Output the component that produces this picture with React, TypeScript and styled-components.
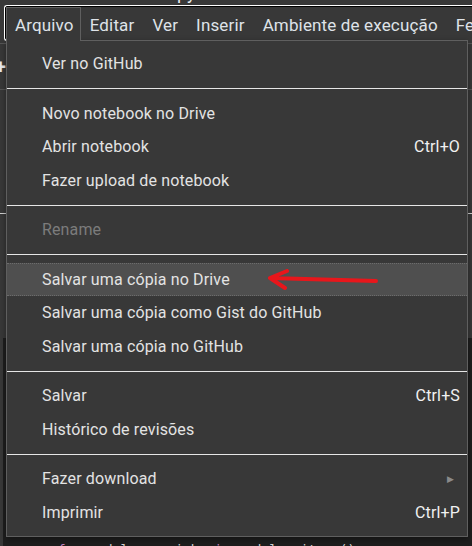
import React from "react";
import styled, { createGlobalStyle } from "styled-components";

const Global = createGlobalStyle`
  html, body { margin: 0; padding: 0; background: #383838; }
  body { font-family: Roboto, "Noto Sans", sans-serif; overflow: hidden; }
`;

const Page = styled.div`
  position: relative;
  width: 472px;
  height: 546px;
  overflow: hidden;
  background: #383838;
`;

const TitleStrip = styled.div`
  height: 5px;
  overflow: hidden;
  background: #383838;
`;

const TitleText = styled.div`
  margin: -17px 0 0 96px;
  font-size: 18px;
  line-height: 20px;
  color: #e8eaed;
`;

const MenuBar = styled.div`
  display: flex;
  align-items: flex-start;
  width: 540px;
  margin-left: 4px;
  padding: 1px 0 0 1px;
  box-sizing: border-box;
  height: 36px;
  border: 1px solid #ffffff;
  border-right: none;
  border-radius: 3px 0 0 3px;
  box-shadow: inset 1px 1px 0 #000;
`;

const MenuTab = styled.div<{ $open?: boolean }>`
  position: relative;
  z-index: ${(p) => (p.$open ? 3 : 1)};
  height: 34px;
  box-sizing: border-box;
  display: flex;
  align-items: center;
  padding: ${(p) => (p.$open ? "0 6px 0 8px" : "0 8px")};
  border: 1px solid ${(p) => (p.$open ? "#5f5f5f" : "transparent")};
  border-bottom: none;
  background: #383838;
  font-size: 17px;
  letter-spacing: 0.15px;
  color: #dfe3e8;
  white-space: nowrap;
`;

const Toolbar = styled.div`
  height: 45px;
  border-top: 1px solid #555;
  margin-top: 2px;
  border-bottom: 1px solid #555;
  display: flex;
  align-items: center;
`;

const PlusGlyph = styled.span`
  margin-left: -5px;
  font-size: 20px;
  font-weight: 700;
  color: #e8eaed;
`;

const Middle = styled.div`
  height: 248px;
  display: flex;
  flex-direction: column;
`;

const MidRule = styled.div`
  margin-top: 123px;
  height: 1px;
  background: #cfcfcf;
`;

const CodeArea = styled.div`
  margin-left: 3px;
  height: 220px;
  background: #1e1e1e;
  font-family: "DejaVu Sans Mono", monospace;
  font-size: 13px;
  line-height: 16px;
  padding-top: 204px;
  color: #d4d4d4;
  white-space: pre;
`;

const Kw = styled.span`
  color: #c586c0;
`;

const Dropdown = styled.div`
  position: absolute;
  z-index: 2;
  left: 6px;
  top: 40px;
  width: 462px;
  box-sizing: border-box;
  border: 1px solid #5f5f5f;
  background: #383838;
  padding: 6px 0 7px;
  box-shadow: 0 2px 6px rgba(0, 0, 0, 0.4);
`;

const Item = styled.div<{ $disabled?: boolean; $active?: boolean }>`
  position: relative;
  display: flex;
  align-items: center;
  justify-content: space-between;
  height: 33.5px;
  box-sizing: border-box;
  padding: 0 7px 0 35px;
  font-size: 16px;
  letter-spacing: 0.14px;
  color: ${(p) => (p.$disabled ? "#7c7c7c" : "#e3e3e3")};
  background: ${(p) => (p.$active ? "#4f4f4f" : "transparent")};
  border-top: 1px dotted ${(p) => (p.$active ? "#6c6c6c" : "transparent")};
  border-bottom: 1px dotted ${(p) => (p.$active ? "#6c6c6c" : "transparent")};
  white-space: nowrap;
`;

const Shortcut = styled.span`
  color: #f1f1f1;
`;

const SubArrow = styled.span`
  color: #8a8a8a;
  font-size: 9px;
  margin-right: 6px;
`;

const Separator = styled.div`
  height: 1px;
  margin: 7.5px 0;
  background: #e6e6e6;
`;

const ArrowSvg = styled.svg`
  position: absolute;
  left: 255px;
  top: 5px;
`;

type Entry =
  | { sep: true }
  | { label: string; shortcut?: string; disabled?: boolean; active?: boolean; sub?: boolean; arrow?: boolean };

const entries: Entry[] = [
  { label: "Ver no GitHub" },
  { sep: true },
  { label: "Novo notebook no Drive" },
  { label: "Abrir notebook", shortcut: "Ctrl+O" },
  { label: "Fazer upload de notebook" },
  { sep: true },
  { label: "Rename", disabled: true },
  { sep: true },
  { label: "Salvar uma cópia no Drive", active: true, arrow: true },
  { label: "Salvar uma cópia como Gist do GitHub" },
  { label: "Salvar uma cópia no GitHub" },
  { sep: true },
  { label: "Salvar", shortcut: "Ctrl+S" },
  { label: "Histórico de revisões" },
  { sep: true },
  { label: "Fazer download", sub: true },
  { label: "Imprimir", shortcut: "Ctrl+P" },
];

const menus = ["Arquivo", "Editar", "Ver", "Inserir", "Ambiente de execução", "Ferramentas"];

export default function App() {
  return (
    <>
      <Global />
      <Page>
        <TitleStrip>
          <TitleText>Untitled0.ipynb</TitleText>
        </TitleStrip>
        <MenuBar>
          {menus.map((m, i) => (
            <MenuTab key={m} $open={i === 0}>
              {m}
            </MenuTab>
          ))}
        </MenuBar>
        <Toolbar>
          <PlusGlyph>+</PlusGlyph>
        </Toolbar>
        <Middle>
          <MidRule />
        </Middle>
        <CodeArea>
          {"       "}
          <Kw>for</Kw>
          {" modelo, caminho "}
          <Kw>in</Kw>
          {" modelos.items():"}
        </CodeArea>
        <Dropdown>
          {entries.map((e, i) =>
            "sep" in e ? (
              <Separator key={i} />
            ) : (
              <Item key={i} $disabled={e.disabled} $active={e.active}>
                <span>{e.label}</span>
                {e.shortcut && <Shortcut>{e.shortcut}</Shortcut>}
                {e.sub && <SubArrow>▶</SubArrow>}
                {e.arrow && (
                  <ArrowSvg width="120" height="24" viewBox="0 0 120 24">
                    <path
                      d="M114 12 L8 9 M8 9 L25 2 M8 9 L23 19"
                      stroke="#e8161b"
                      strokeWidth="4"
                      strokeLinecap="round"
                      strokeLinejoin="round"
                      fill="none"
                    />
                  </ArrowSvg>
                )}
              </Item>
            )
          )}
        </Dropdown>
      </Page>
    </>
  );
}
